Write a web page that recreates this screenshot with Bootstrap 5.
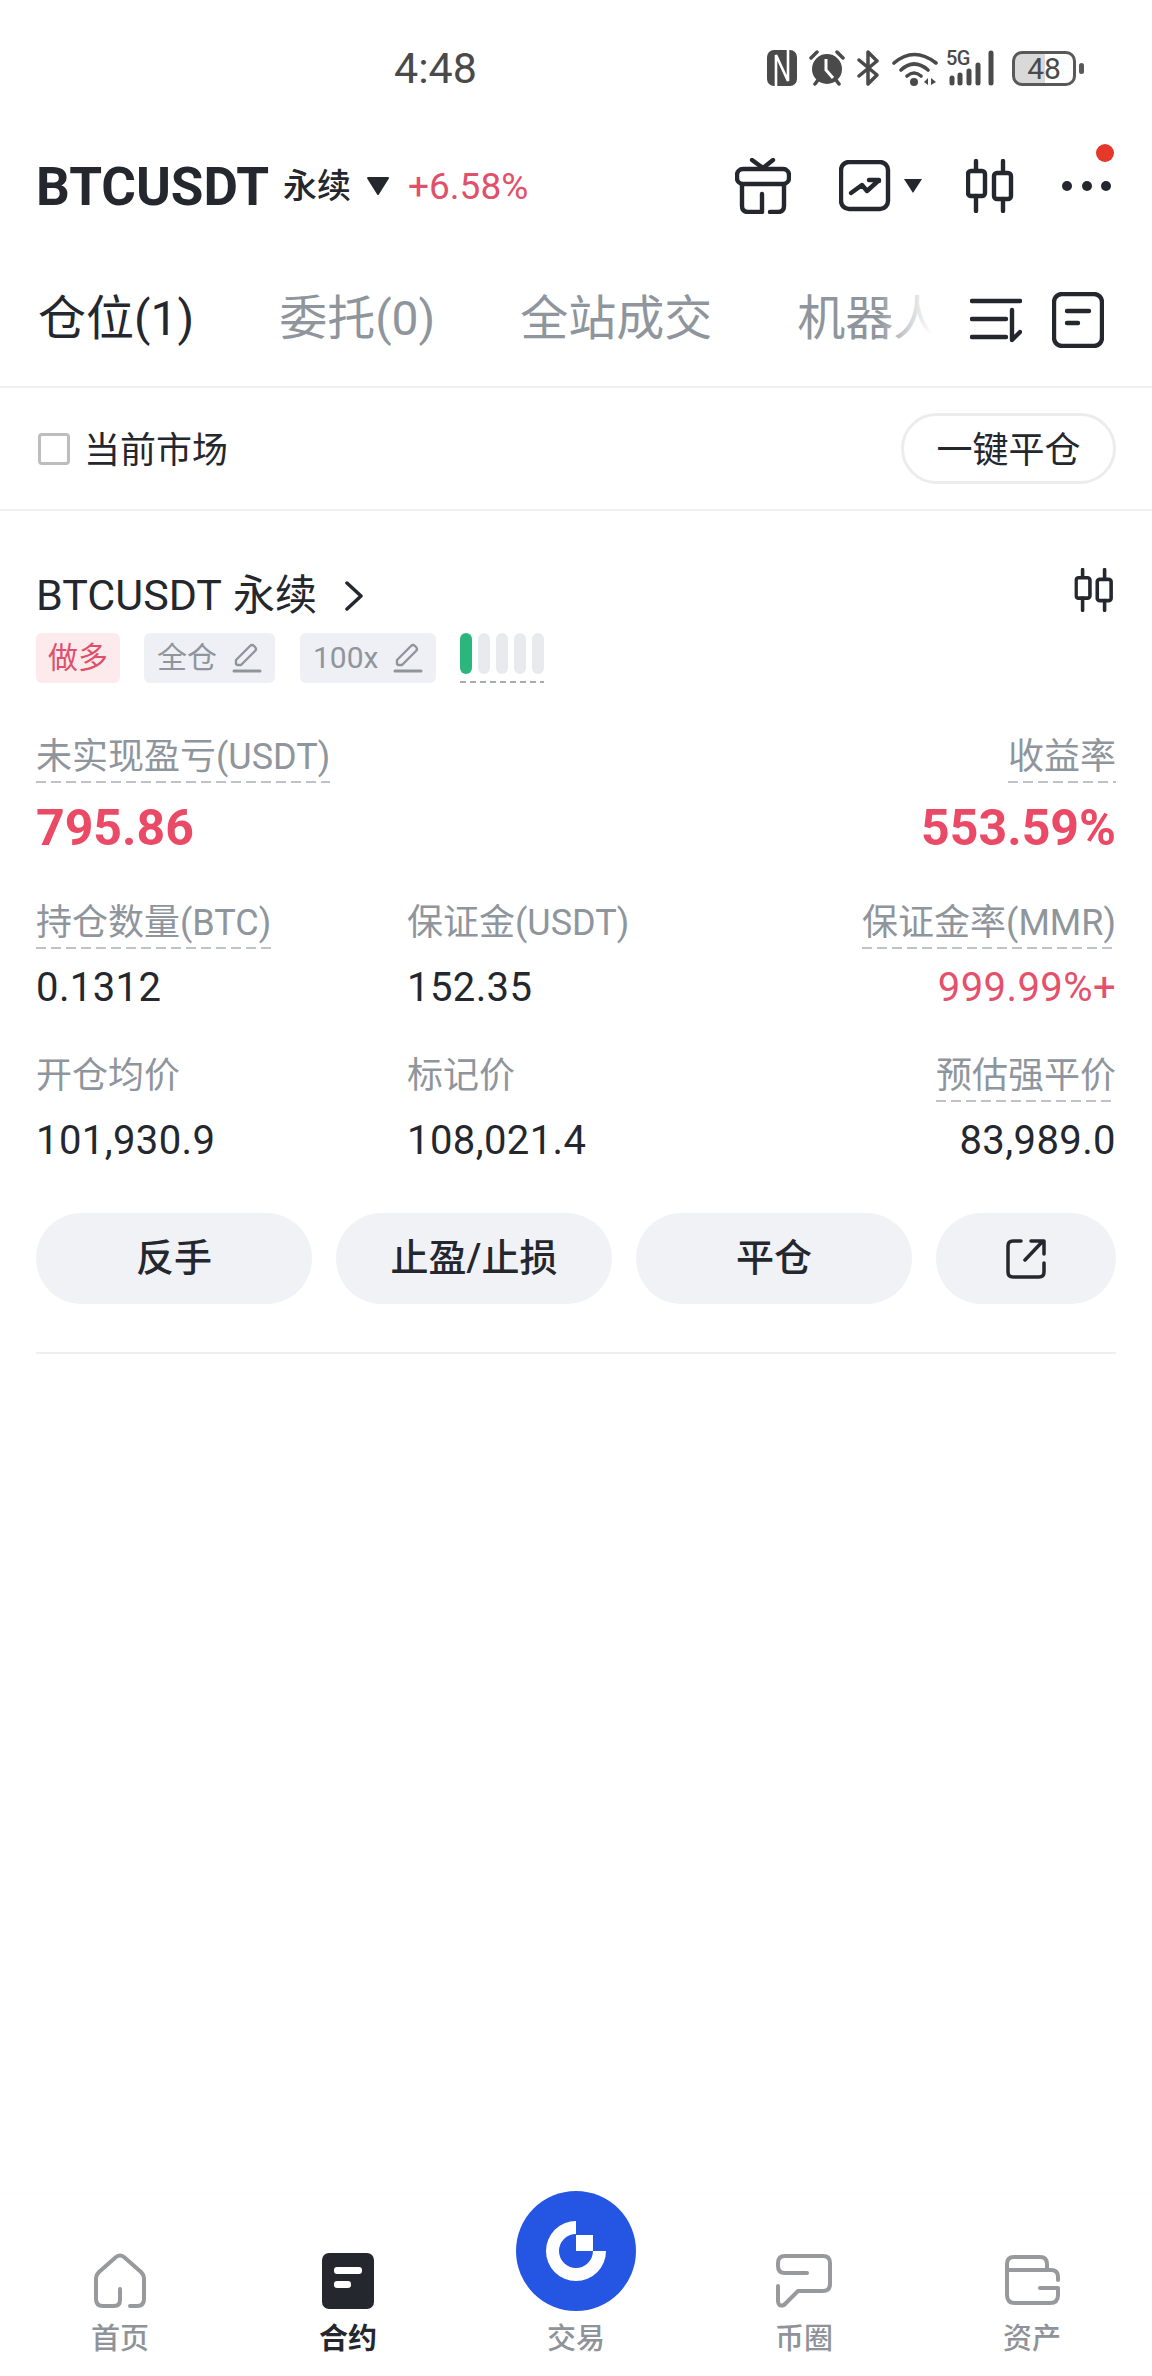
<!DOCTYPE html>
<html lang="zh-CN">
<head>
  <meta charset="UTF-8">
  <title>合约 仓位</title>
  <link href="https://cdn.jsdelivr.net/npm/bootstrap@5.3.0/dist/css/bootstrap.min.css" rel="stylesheet">
  <style>
    body { font-family: Roboto, "Noto Sans CJK SC", sans-serif; color: #24272e; background: #fff; }
    svg { display: block; flex: none; }
    .ink { fill: none; stroke: #24272e; stroke-width: 4.4; stroke-linecap: round; stroke-linejoin: round; }
    .ink-thin { stroke-width: 3.5; }
    .ink-gray { fill: none; stroke: #98999d; stroke-width: 4; stroke-linecap: round; stroke-linejoin: round; }

    .status-bar { height: 136px; padding: 50px 68px 0 394px; color: #4a4a4a; }
    .status-time { font-size: 43px; line-height: 36px; width: 373px; }
    .signal { position: relative; width: 50px; height: 36px; }
    .signal-5g { position: absolute; left: 0; top: -3px; font-size: 20px; line-height: 22px; font-weight: 500; letter-spacing: -.5px; }
    .battery { width: 64px; height: 35px; border: 3px solid #595959; border-radius: 10px; font-size: 30px; line-height: 29px; text-align: center; background: linear-gradient(to right, #d9d9d9 52%, #fff 52%); }
    .battery-nub { width: 5px; height: 11px; background: #595959; border-radius: 3px; margin-left: 3px; }

    .top-row { height: 100px; padding: 0 40px 0 36px; }
    .pair-name { font-size: 53px; font-weight: 700; line-height: 60px; margin-top: 2px; }
    .pair-kind { font-size: 34px; font-weight: 500; margin-left: 14px; line-height: 60px; }
    .pair-caret { margin-left: 15px; }
    .pair-change { font-size: 37px; color: #e0506a; margin-left: 18px; line-height: 60px; margin-top: 2px; }
    .top-icons { position: relative; }
    .red-dot { position: absolute; width: 18px; height: 18px; border-radius: 50%; background: #e6372b; right: -2px; top: -14px; }

    .tab-row { height: 152px; padding: 15px 48px 0 38px; border-bottom: 2px solid #f0f0f0; }
    .tab-strip { width: 905px; gap: 85px; position: relative; white-space: nowrap; font-size: 48px; line-height: 60px; color: #8f959c; }
    .tab-strip::after { content: ""; position: absolute; right: 0; top: 0; bottom: 0; width: 64px; background: linear-gradient(to right, rgba(255,255,255,0), #fff 85%); }
    .tab-on { color: #24272e; }
    .tab-tool { margin-top: 2px; }

    .filter-row { height: 123px; padding: 0 36px; border-bottom: 2px solid #f0f0f0; font-size: 36px; }
    .fake-check { width: 32px; height: 32px; border: 3px solid #bdbdbd; border-radius: 4px; margin: 0 14px 0 2px; }
    .filter-text { padding-top: 4px; }
    .close-all { height: 71px; width: 215px; padding: 4px 0 0; font-size: 36px; color: #24272e; border: 3px solid #ececec; }

    .position { padding: 59px 36px 0; }
    .pos-title { font-size: 43px; line-height: 50px; }
    .pos-title-kind { font-size: 42px; margin-left: 11px; }
    .pos-chevron { margin-left: 28px; }
    .pos-candle { margin-top: -12px; margin-right: 2px; }
    .tag-row { margin-top: 12px; height: 50px; }
    .pos-tag { height: 50px; border-radius: 6px; font-size: 30px; line-height: 50px; color: #90959c; background: #eef0f5; padding: 0 13px; margin-right: 25px; }
    .pos-tag svg { margin-left: 15px; }
    .tag-long { background: #fdeaed; color: #e0506a; padding: 0 12px; margin-right: 24px; }
    .risk-meter { width: 84px; height: 50px; gap: 6px; background: linear-gradient(to right, #a8abb0 60%, transparent 0) bottom left / 10px 2px repeat-x; margin-left: -1px; }
    .risk-cell { width: 12px; height: 41px; border-radius: 6px; background: #e8eaed; }
    .risk-on { background: #2bb67e; }

    .stat-row { margin-top: 41px; }
    .stat-row-first { margin-top: 50px; }
    .stat-row-mid { margin-top: 46px; }
    .stat { width: 371px; }
    .stat-end { width: auto; flex: 1; align-items: flex-end; }
    .stat-label { height: 50px; line-height: 48px; font-size: 36px; color: #8f959c; }
    .dashed { background: linear-gradient(to right, #bfc3c9 66%, transparent 0) bottom left / 15px 2px repeat-x; }
    .stat-value { font-size: 40px; letter-spacing: .4px; line-height: 46px; margin-top: 16px; }
    .stat-big { font-size: 50px; font-weight: 700; line-height: 50px; margin-top: 20px; color: #ea4a65; }
    .stat-red { color: #e5506b; }

    .action-row { margin-top: 49px; gap: 24px; }
    .pos-btn { flex: 1; height: 91px; padding: 0; font-size: 38px; font-weight: 500; line-height: 91px; color: #24272e; background: #f0f2f6; border: 0; }
    .pos-btn-icon { flex: none; width: 180px; }
    .end-rule { height: 2px; background: #f0f0f0; margin: 48px 0 0; }

    .tab-bar { height: 185px; padding: 0 6px 19px; box-shadow: inset 0 9px 8px -8px rgba(0,0,0,.012); }
    .bar-item { width: 228px; font-size: 29px; line-height: 36px; font-weight: 500; color: #8f9399; }
    .bar-icon { height: 56px; margin-bottom: 12px; }
    .bar-on { color: #24272e; font-weight: 700; }
    .bar-logo { margin-bottom: 10px; }
  </style>
</head>
<body class="d-flex flex-column vh-100">

  <svg width="0" height="0" class="position-absolute">
    <symbol id="candles" viewBox="0 0 48 54">
      <path class="ink" d="M10 2V11M10 37V52M37 2V13M37 40V52"/>
      <rect class="ink" x="2" y="12" width="17" height="25" rx="3"/>
      <rect class="ink" x="28" y="14" width="17" height="26" rx="3"/>
    </symbol>
    <symbol id="pencil" viewBox="0 0 30 30">
      <path fill="none" stroke="#90959c" stroke-width="2.4" stroke-linejoin="round" d="M4 21V17L18 3Q20 1 22 3L23 4Q25 6 23 8L9 22H5Z"/>
      <path fill="none" stroke="#90959c" stroke-width="3" stroke-linecap="round" d="M2 28H28"/>
    </symbol>
  </svg>

  <!-- status bar -->
  <div class="status-bar d-flex align-items-start">
    <div class="status-time">4:48</div>
    <div class="d-flex align-items-center">
      <svg width="30" height="36" viewBox="0 0 30 36" class="me-2">
        <rect width="30" height="36" rx="7" fill="#4a4a4a"/>
        <path fill="none" stroke="#fff" stroke-width="2.6" d="M9 36V5L21 31V0"/>
      </svg>
      <svg width="36" height="36" viewBox="0 0 36 36" class="ms-1 me-2">
        <circle cx="18" cy="19" r="15" fill="#4a4a4a"/>
        <path fill="none" stroke="#fff" stroke-width="3" d="M17 9V20L24 28"/>
        <path fill="none" stroke="#4a4a4a" stroke-width="3.5" stroke-linecap="round" d="M2 8L8 2M34 8L28 2M6 34L9 30M30 34L27 30"/>
      </svg>
      <svg width="23" height="36" viewBox="0 0 23 36" class="ms-1 me-2">
        <path fill="none" stroke="#4a4a4a" stroke-width="3.5" stroke-linecap="round" stroke-linejoin="round" d="M2 10L20 25L11 34V2L20 11L2 26"/>
      </svg>
      <svg width="46" height="36" viewBox="0 0 46 36" class="ms-1 me-2">
        <path fill="none" stroke="#4a4a4a" stroke-width="3.6" stroke-linecap="round" d="M2 13Q22 -4 44 13M9 20Q22 8 36 20M15 26Q22 20 29 26"/>
        <circle cx="22" cy="32" r="4" fill="#4a4a4a"/>
        <path fill="#4a4a4a" d="M36 28V35L32 32ZM39 28V35L44 32Z"/>
      </svg>
      <div class="signal me-3">
        <span class="signal-5g">5G</span>
        <svg width="50" height="36" viewBox="0 0 50 36">
          <path fill="none" stroke="#4a4a4a" stroke-width="5" stroke-linecap="round" d="M6 28V33M14 25V33M23 21V33M32 15V33M45 3V33"/>
        </svg>
      </div>
      <div class="battery">48</div>
      <div class="battery-nub"></div>
    </div>
  </div>

  <!-- symbol header -->
  <div class="top-row d-flex align-items-center">
    <span class="pair-name">BTCUSDT</span>
    <span class="pair-kind">永续</span>
    <svg class="pair-caret" width="24" height="20" viewBox="0 0 24 20"><path fill="#24272e" stroke="#24272e" stroke-width="2" stroke-linejoin="round" d="M2 2H22L12 18Z"/></svg>
    <span class="pair-change">+6.58%</span>
    <div class="top-icons ms-auto d-flex align-items-center">
      <svg width="56" height="56" viewBox="0 0 56 56">
        <path class="ink" d="M17 2L28 10L38 2"/>
        <rect class="ink" x="2" y="11" width="52" height="15" rx="6"/>
        <path class="ink" d="M7 27V48Q7 54 13 54H27V36M35 54H43Q49 54 49 48V27"/>
      </svg>
      <svg width="52" height="52" viewBox="0 0 52 52" class="ms-5">
        <rect class="ink" x="2" y="2" width="47" height="47" rx="8"/>
        <path class="ink" d="M12 33L23 25L28 31L39 21M30 20H40V21"/>
      </svg>
      <svg width="18" height="14" viewBox="0 0 18 14" style="margin-left:13px"><path fill="#24272e" d="M0 0H18L9 14Z"/></svg>
      <svg width="48" height="54" viewBox="0 0 48 54" style="margin-left:44px"><use href="#candles"/></svg>
      <svg width="50" height="12" viewBox="0 0 50 12" style="margin-left:48px">
        <circle cx="5" cy="6" r="5" fill="#24272e"/><circle cx="25" cy="6" r="5" fill="#24272e"/><circle cx="44" cy="6" r="5" fill="#24272e"/>
      </svg>
      <span class="red-dot"></span>
    </div>
  </div>

  <!-- tabs -->
  <div class="tab-row d-flex align-items-center">
    <div class="tab-strip d-flex">
      <span class="tab-on">仓位(1)</span>
      <span>委托(0)</span>
      <span>全站成交</span>
      <span>机器人</span>
    </div>
    <svg class="tab-tool" width="52" height="46" viewBox="0 0 52 46" style="margin-left:29px">
      <path class="ink" d="M2 4H50M2 22H36M2 40H36M42 13V43L50 35"/>
    </svg>
    <svg class="tab-tool" width="52" height="56" viewBox="0 0 52 56" style="margin-left:30px">
      <rect class="ink" x="2" y="2" width="48" height="52" rx="8"/>
      <path class="ink" d="M15 19H37M15 31H26"/>
    </svg>
  </div>

  <!-- filter -->
  <div class="filter-row d-flex align-items-center">
    <span class="fake-check"></span>
    <span class="filter-text">当前市场</span>
    <button type="button" class="close-all btn rounded-pill bg-white ms-auto">一键平仓</button>
  </div>

  <!-- position card -->
  <main class="position flex-grow-1">
    <div class="d-flex align-items-center">
      <span class="pos-title">BTCUSDT<span class="pos-title-kind">永续</span></span>
      <svg class="pos-chevron" width="18" height="32" viewBox="0 0 18 32"><path class="ink ink-thin" d="M2 3L16 16L2 29"/></svg>
      <svg class="pos-candle ms-auto" width="40" height="44" viewBox="0 0 48 54"><use href="#candles"/></svg>
    </div>

    <div class="tag-row d-flex">
      <span class="pos-tag tag-long">做多</span>
      <span class="pos-tag d-flex align-items-center">全仓<svg width="30" height="30" viewBox="0 0 30 30"><use href="#pencil"/></svg></span>
      <span class="pos-tag d-flex align-items-center">100x<svg width="30" height="30" viewBox="0 0 30 30"><use href="#pencil"/></svg></span>
      <div class="risk-meter d-flex">
        <span class="risk-cell risk-on"></span>
        <span class="risk-cell"></span>
        <span class="risk-cell"></span>
        <span class="risk-cell"></span>
        <span class="risk-cell"></span>
      </div>
    </div>

    <div class="stat-row stat-row-first d-flex justify-content-between">
      <div class="d-flex flex-column align-items-start">
        <span class="stat-label dashed">未实现盈亏(USDT)</span>
        <span class="stat-big">795.86</span>
      </div>
      <div class="d-flex flex-column align-items-end">
        <span class="stat-label dashed">收益率</span>
        <span class="stat-big">553.59%</span>
      </div>
    </div>

    <div class="stat-row stat-row-mid d-flex">
      <div class="stat d-flex flex-column align-items-start">
        <span class="stat-label dashed">持仓数量(BTC)</span>
        <span class="stat-value">0.1312</span>
      </div>
      <div class="stat d-flex flex-column align-items-start">
        <span class="stat-label">保证金(USDT)</span>
        <span class="stat-value">152.35</span>
      </div>
      <div class="stat stat-end d-flex flex-column">
        <span class="stat-label dashed">保证金率(MMR)</span>
        <span class="stat-value stat-red">999.99%+</span>
      </div>
    </div>

    <div class="stat-row d-flex">
      <div class="stat d-flex flex-column align-items-start">
        <span class="stat-label">开仓均价</span>
        <span class="stat-value">101,930.9</span>
      </div>
      <div class="stat d-flex flex-column align-items-start">
        <span class="stat-label">标记价</span>
        <span class="stat-value">108,021.4</span>
      </div>
      <div class="stat stat-end d-flex flex-column">
        <span class="stat-label dashed">预估强平价</span>
        <span class="stat-value">83,989.0</span>
      </div>
    </div>

    <div class="action-row d-flex">
      <button type="button" class="pos-btn btn rounded-pill">反手</button>
      <button type="button" class="pos-btn btn rounded-pill">止盈/止损</button>
      <button type="button" class="pos-btn btn rounded-pill">平仓</button>
      <button type="button" class="pos-btn pos-btn-icon btn rounded-pill d-flex align-items-center justify-content-center">
        <svg width="40" height="40" viewBox="0 0 40 40">
          <path class="ink ink-thin" d="M15 2H7Q2 2 2 7V33Q2 38 7 38H33Q38 38 38 33V24M19 21L37 2M25 2H38V15"/>
        </svg>
      </button>
    </div>
    <div class="end-rule"></div>
  </main>

  <!-- bottom navigation -->
  <nav class="tab-bar d-flex align-items-end">
    <a class="bar-item d-flex flex-column align-items-center text-decoration-none">
      <div class="bar-icon">
        <svg width="54" height="56" viewBox="0 0 54 56">
          <path class="ink-gray" d="M27 36V47Q27 53 21 53H10Q3 53 3 46V25Q3 22 6 19L23 4Q27 1 31 4L48 19Q51 22 51 25V46Q51 53 44 53H37"/>
        </svg>
      </div>
      首页
    </a>
    <a class="bar-item bar-on d-flex flex-column align-items-center text-decoration-none">
      <div class="bar-icon">
        <svg width="52" height="56" viewBox="0 0 52 56">
          <rect width="52" height="56" rx="7" fill="#24272e"/>
          <rect x="12" y="14" width="28" height="7" rx="3" fill="#fff"/>
          <rect x="12" y="28" width="17" height="7" rx="3" fill="#fff"/>
        </svg>
      </div>
      合约
    </a>
    <a class="bar-item d-flex flex-column align-items-center text-decoration-none">
      <div class="bar-logo">
        <svg width="120" height="120" viewBox="0 0 120 120">
          <circle cx="60" cy="60" r="60" fill="#2456e3"/>
          <path fill="#fff" d="M60 30A30 30 0 1 0 90 60H77A17 17 0 1 1 60 43Z"/>
          <rect x="60" y="44" width="17" height="16" fill="#fff"/>
        </svg>
      </div>
      交易
    </a>
    <a class="bar-item d-flex flex-column align-items-center text-decoration-none">
      <div class="bar-icon">
        <svg width="58" height="56" viewBox="0 0 58 56">
          <path class="ink-gray" d="M32 20H10Q3 20 3 13V10Q3 3 10 3H48Q55 3 55 10V31Q55 38 48 38H23L9 52Q3 54 3 48V33"/>
        </svg>
      </div>
      币圈
    </a>
    <a class="bar-item d-flex flex-column align-items-center text-decoration-none">
      <div class="bar-icon">
        <svg width="56" height="56" viewBox="0 0 56 56">
          <path class="ink-gray" d="M3 17V11Q3 4 10 4H36Q43 4 43 11V17M54 27V24Q54 17 47 17H3V42Q3 50 11 50H46Q54 50 54 42V35H36"/>
        </svg>
      </div>
      资产
    </a>
  </nav>

  <script src="https://cdn.jsdelivr.net/npm/bootstrap@5.3.0/dist/js/bootstrap.bundle.min.js"></script>
</body>
</html>
